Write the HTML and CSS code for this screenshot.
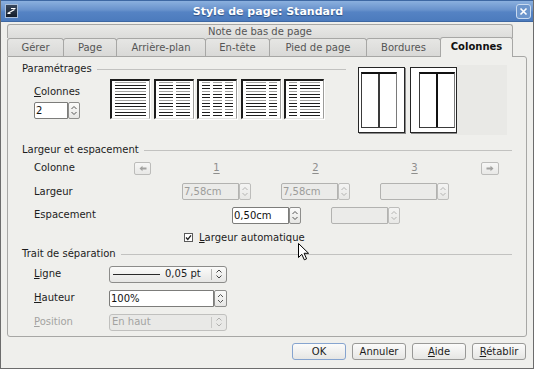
FILE: index.html
```html
<!DOCTYPE html>
<html lang="fr">
<head>
<meta charset="utf-8">
<title>Style de page: Standard</title>
<link rel="stylesheet" href="styles.css">
</head>
<body>
<div class="dialog">
  <div class="titlebar">
    <span class="app-icon">
      <svg width="13" height="14" viewBox="0 0 13 14"><defs><linearGradient id="ig" x1="0" y1="0" x2="0" y2="1"><stop offset="0" stop-color="#3a4a60"/><stop offset="1" stop-color="#121b28"/></linearGradient></defs><rect x="0.5" y="0.5" width="12" height="13" fill="url(#ig)" stroke="#a9bed9"/><path d="M6 4.5 H10.5 M2.5 9.5 L9.5 5.5 M2.5 9.5 H5.5" stroke="#fff" stroke-width="1.2" fill="none"/></svg>
    </span>
    <span class="title">Style de page: Standard</span>
    <span class="close">
      <svg width="15" height="15" viewBox="0 0 15 15"><rect x="0.5" y="0.5" width="14" height="14" rx="2.5" fill="#6d96cc" stroke="#c9daef"/><path d="M4.5 4.5 L10.5 10.5 M10.5 4.5 L4.5 10.5" stroke="#fff" stroke-width="1.6"/></svg>
    </span>
  </div>

  <div class="client">
    <div class="tabrow1"><div class="tab1">Note de bas de page</div></div>
    <div class="tabrow2">
      <div class="tab t-gerer">Gérer</div>
      <div class="tab t-page">Page</div>
      <div class="tab t-arriere">Arrière-plan</div>
      <div class="tab t-entete">En-tête</div>
      <div class="tab t-pied">Pied de page</div>
      <div class="tab t-bord">Bordures</div>
      <div class="tab t-col active">Colonnes</div>
    </div>

    <div class="panel">
      <div class="sec1">
        <div class="sec1-left">
          <div class="heading">Paramétrages</div>
          <div class="sec1-row">
            <div class="colonnes-group">
              <div class="lbl"><u>C</u>olonnes</div>
              <div class="spin sp-cols">
                <div class="spin-input">2</div>
                <div class="spin-btn"><svg width="10" height="15" viewBox="0 0 10 15"><path d="M2.5 6 L5 3.5 L7.5 6 M2.5 9 L5 11.5 L7.5 9" stroke="#555" fill="none"/></svg></div>
              </div>
            </div>
            <div class="presets">
              <div class="preset"><div class="pcol"></div></div>
              <div class="preset"><div class="pcol"></div><div class="pcol"></div></div>
              <div class="preset"><div class="pcol"></div><div class="pcol"></div><div class="pcol"></div></div>
              <div class="preset"><div class="pcol wide"></div><div class="pcol"></div></div>
              <div class="preset"><div class="pcol"></div><div class="pcol wide"></div></div>
            </div>
          </div>
        </div>
        <div class="sec1-right">
          <div class="pv"><div class="pv-page pv-left"><div class="pv-c pv-c1"></div><div class="pv-c"></div></div></div>
          <div class="pv"><div class="pv-page pv-right"><div class="pv-c pv-c1 strong"></div><div class="pv-c"></div></div></div>
          <div class="pv-empty"></div>
        </div>
      </div>

      <div class="heading">Largeur et espacement</div>
      <div class="row r-col">
        <div class="lbl l-col">Colonne</div>
        <div class="arrow-btn"><svg width="8" height="7" viewBox="0 0 8 7"><path d="M0.5 3.5 L3.5 0.8 V2.5 H7.5 V4.5 H3.5 V6.2 Z" fill="#a2a2a0"/></svg></div>
        <div class="num first">1</div>
        <div class="num">2</div>
        <div class="num">3</div>
        <div class="arrow-btn right"><svg width="8" height="7" viewBox="0 0 8 7"><path d="M7.5 3.5 L4.5 0.8 V2.5 H0.5 V4.5 H4.5 V6.2 Z" fill="#a2a2a0"/></svg></div>
      </div>
      <div class="row r-larg">
        <div class="lbl l-larg">Largeur</div>
        <div class="spin dis">
          <div class="spin-input">7,58cm</div>
          <div class="spin-btn"><svg width="10" height="15" viewBox="0 0 10 15"><path d="M2.5 6 L5 3.5 L7.5 6 M2.5 9 L5 11.5 L7.5 9" stroke="#b4b4b2" fill="none"/></svg></div>
        </div>
        <div class="spin dis gap30">
          <div class="spin-input">7,58cm</div>
          <div class="spin-btn"><svg width="10" height="15" viewBox="0 0 10 15"><path d="M2.5 6 L5 3.5 L7.5 6 M2.5 9 L5 11.5 L7.5 9" stroke="#b4b4b2" fill="none"/></svg></div>
        </div>
        <div class="spin dis gap30">
          <div class="spin-input"></div>
          <div class="spin-btn"><svg width="10" height="15" viewBox="0 0 10 15"><path d="M2.5 6 L5 3.5 L7.5 6 M2.5 9 L5 11.5 L7.5 9" stroke="#b4b4b2" fill="none"/></svg></div>
        </div>
      </div>
      <div class="row r-esp">
        <div class="lbl l-esp">Espacement</div>
        <div class="spin">
          <div class="spin-input">0,50cm</div>
          <div class="spin-btn"><svg width="10" height="15" viewBox="0 0 10 15"><path d="M2.5 6 L5 3.5 L7.5 6 M2.5 9 L5 11.5 L7.5 9" stroke="#555" fill="none"/></svg></div>
        </div>
        <div class="spin dis gap30">
          <div class="spin-input"></div>
          <div class="spin-btn"><svg width="10" height="15" viewBox="0 0 10 15"><path d="M2.5 6 L5 3.5 L7.5 6 M2.5 9 L5 11.5 L7.5 9" stroke="#b4b4b2" fill="none"/></svg></div>
        </div>
      </div>
      <div class="row r-chk">
        <div class="check"><svg width="9" height="9" viewBox="0 0 9 9"><rect x="0.5" y="0.5" width="8" height="8" fill="#fff" stroke="#5a5a5a"/><path d="M2 4.5 L3.8 6.5 L7 2.3" stroke="#222" stroke-width="1.3" fill="none"/></svg></div>
        <div class="lbl"><u>L</u>argeur automatique</div>
      </div>

      <div class="heading">Trait de séparation</div>
      <div class="rows3">
        <div class="row r3">
          <div class="lbl l3"><u>L</u>igne</div>
          <div class="combo">
            <span class="combo-line"></span>
            <span class="combo-text">0,05 pt</span>
            <span class="combo-sep"></span>
            <span class="combo-arr"><svg width="8" height="12" viewBox="0 0 8 12"><path d="M1.5 4.5 L4 2 L6.5 4.5 M1.5 7.5 L4 10 L6.5 7.5" stroke="#444" fill="none"/></svg></span>
          </div>
        </div>
        <div class="row r3">
          <div class="lbl l3"><u>H</u>auteur</div>
          <div class="spin sp-haut">
            <div class="spin-input">100%</div>
            <div class="spin-btn"><svg width="11" height="15" viewBox="0 0 11 15"><path d="M3 6 L5.5 3.5 L8 6 M3 9 L5.5 11.5 L8 9" stroke="#555" fill="none"/></svg></div>
          </div>
        </div>
        <div class="row r3">
          <div class="lbl l3 disabled"><u>P</u>osition</div>
          <div class="combo dis">
            <span class="combo-text left">En haut</span>
            <span class="combo-sep"></span>
            <span class="combo-arr"><svg width="8" height="12" viewBox="0 0 8 12"><path d="M1.5 4.5 L4 2 L6.5 4.5 M1.5 7.5 L4 10 L6.5 7.5" stroke="#b0b0ae" fill="none"/></svg></span>
          </div>
        </div>
      </div>
    </div>

    <div class="buttons">
      <div class="btn default">OK</div>
      <div class="btn">Annuler</div>
      <div class="btn"><u>A</u>ide</div>
      <div class="btn"><u>R</u>établir</div>
    </div>
  </div>

  <svg class="cursor" width="12" height="18" viewBox="0 0 12 18"><path d="M0.5 0.5 V14.5 L3.8 11.3 L6.3 16.8 L8.6 15.8 L6.1 10.3 H10.6 Z" fill="#fff" stroke="#000" stroke-linejoin="round"/></svg>
</div>
</body>
</html>
```

FILE: styles.css
```css
html, body {
  margin: 0;
  padding: 0;
}
body {
  background: #efefec;
  font-family: "DejaVu Sans", "Noto Sans", sans-serif;
  font-size: 10px;
  color: #1c1c1c;
}
u { text-decoration: underline; text-underline-offset: 1px; }

.dialog {
  position: relative;
  width: 534px;
  height: 369px;
  box-sizing: border-box;
  background: #efefec;
  border: 1px solid #6c6c6c;
  border-top: none;
  overflow: hidden;
}

/* title bar */
.titlebar {
  height: 22px;
  margin: 0 -1px;
  box-sizing: border-box;
  background: linear-gradient(#8bb0de, #6892cc 45%, #5583c4 55%, #4c7bbd);
  border: 1px solid #3e68a3;
  display: grid;
  grid-template-columns: 1fr auto 1fr;
  align-items: center;
  padding: 0 2px 0 4px;
}
.app-icon { display: flex; justify-self: start; }
.title {
  color: #fff;
  font-weight: bold;
  font-size: 11px;
  text-shadow: 0 1px 1px #2d4f80;
}
.close { display: flex; justify-self: end; }

/* client */
.client {
  padding: 2px 6px 0 6px;
}
.tabrow1 { width: 506px; height: 14px; }
.tab1 {
  height: 14px;
  box-sizing: border-box;
  border: 1px solid #a7a7a5;
  border-bottom: none;
  border-radius: 3px 3px 0 0;
  background: linear-gradient(#e9e9e7, #dcdcda);
  text-align: center;
  line-height: 14px;
  color: #555;
}
.tabrow2 {
  display: flex;
  align-items: flex-end;
  width: 506px;
  height: 18px;
}
.tab {
  height: 18px;
  box-sizing: border-box;
  border: 1px solid #a7a7a5;
  border-bottom: none;
  border-radius: 3px 3px 0 0;
  margin-right: -1px;
  background: linear-gradient(#e6e6e4, #d9d9d7);
  text-align: center;
  line-height: 18px;
  color: #555;
  flex: none;
}
.t-gerer { width: 57px; }
.t-page { width: 54px; }
.t-arriere { width: 90px; }
.t-entete { width: 65px; }
.t-pied { width: 98px; }
.t-bord { width: 75px; }
.t-col { width: 73px; margin-right: 0; }
.tab.active {
  height: 20px;
  margin-bottom: -1px;
  background: #efefec;
  font-weight: bold;
  color: #111;
  line-height: 18px;
  position: relative;
  z-index: 1;
}

/* panel */
.panel {
  width: 520px;
  height: 281px;
  box-sizing: border-box;
  border: 1px solid #a7a7a5;
  border-radius: 0 3px 3px 3px;
  background: #efefec;
  padding: 6px 14px 0 14px;
}
.heading {
  display: flex;
  align-items: center;
  height: 12px;
  line-height: 12px;
  color: #1c1c1c;
}
.heading::after {
  content: "";
  flex: 1;
  height: 1px;
  background: #c2c2c0;
  margin-left: 5px;
}

.sec1 {
  display: flex;
  align-items: flex-start;
  height: 81px;
}
.sec1-left { width: 324px; }
.sec1-row { display: flex; margin-top: 4px; }
.colonnes-group {
  width: 88px;
  box-sizing: border-box;
  padding-left: 12px;
  padding-top: 7px;
}
.colonnes-group .lbl { height: 12px; line-height: 12px; margin-bottom: 4px; }
.presets { display: flex; gap: 3.5px; }
.preset {
  width: 40px;
  height: 40px;
  box-sizing: border-box;
  background: #fff;
  border-top: 2px solid #1c1c1c;
  border-left: 2px solid #1c1c1c;
  border-right: 1px solid #9c9c9a;
  border-bottom: 1px solid #e4e4e2;
  box-shadow: 1px 1px 0 #fff;
  padding: 1px 3px 2px 3px;
  display: flex;
  gap: 3px;
}
.pcol {
  flex: 1;
  background: repeating-linear-gradient(to bottom,
    #a4a4a2 0 1px, transparent 1px 3px,
    #1e1e1e 3px 4px, transparent 4px 6px,
    #1e1e1e 6px 7px, transparent 7px 9px);
}
.pcol.wide { flex: 2.6; }

.sec1-right {
  margin-left: 12px;
  margin-top: 2px;
  height: 70px;
  display: flex;
  align-items: center;
}
.pv {
  width: 47px;
  height: 66px;
  box-sizing: border-box;
  background: #fff;
  border: 1px solid #262626;
  box-shadow: 1px 1px 0 #8a8a8a;
  margin-right: 5px;
  padding-top: 4px;
}
.pv-page {
  width: 36px;
  height: 56px;
  box-sizing: border-box;
  background: #fff;
  border-top: 2px solid #111;
  border-left: 1px solid #3a3a3a;
  border-right: 1px solid #7a7a7a;
  border-bottom: 1px solid #3a3a3a;
  display: flex;
}
.pv-left { margin-left: 2px; }
.pv-right { margin-left: 8px; }
.pv-c { flex: 1; }
.pv-c1 { border-right: 2px solid #3a3a3a; }
.pv-c1.strong { border-right-color: #111; }
.pv-empty {
  width: 50px;
  height: 70px;
  background: #e9e9e6;
  margin-left: -5px;
}

/* rows */
.row {
  display: flex;
  align-items: center;
  padding-left: 12px;
}
.r-col { height: 24px; }
.r-larg { height: 23px; }
.r-esp { height: 24px; }
.r-chk { height: 21px; padding-left: 162px; }
.rows3 { margin-top: 2px; }
.r3 { height: 24px; }
.lbl { line-height: 12px; white-space: nowrap; }
.l-col { width: 100px; }
.l-larg { width: 148px; }
.l-esp { width: 198px; }
.l3 { width: 75px; }
.lbl.disabled { color: #a3a3a1; }

.arrow-btn {
  width: 17px;
  height: 13px;
  box-sizing: border-box;
  border: 1px solid #bcbcba;
  border-radius: 2px;
  background: linear-gradient(#f7f7f6, #e8e8e6);
  display: flex;
  align-items: center;
  justify-content: center;
}
.arrow-btn.right { width: 18px; margin-left: 32px; }
.num {
  width: 69px;
  margin-left: 30px;
  text-align: center;
  color: #8e8e8c;
  text-decoration: underline;
  text-underline-offset: 2px;
  line-height: 12px;
}
.num.first { margin-left: 31px; }

.spin {
  display: flex;
  height: 17px;
  width: 69px;
}
.spin.gap30 { margin-left: 30px; }
.spin-input {
  flex: 1;
  box-sizing: border-box;
  height: 17px;
  border: 1px solid #7c7c7a;
  border-radius: 2px 0 0 2px;
  background: #fff;
  padding-left: 1px;
  line-height: 15px;
  color: #111;
  overflow: hidden;
}
.spin-btn {
  width: 12px;
  height: 17px;
  box-sizing: border-box;
  border: 1px solid #8e8e8c;
  border-radius: 2px;
  background: linear-gradient(#fbfbfa, #e6e6e4);
  display: flex;
  flex: none;
}
.spin.dis .spin-input {
  background: #ebebe9;
  border-color: #b2b2b0;
  color: #9c9c9a;
}
.spin.dis .spin-btn {
  border-color: #bdbdbb;
  background: linear-gradient(#f4f4f3, #e8e8e6);
}
.sp-cols { width: 46px; }
.sp-haut { width: 118px; }
.sp-haut .spin-btn { width: 13px; }

.check { display: flex; margin-right: 6px; }

.combo {
  width: 118px;
  height: 17px;
  box-sizing: border-box;
  border: 1px solid #8c8c8a;
  border-radius: 3px;
  background: linear-gradient(#fbfbfa, #e6e6e4);
  display: flex;
  align-items: center;
}
.combo-line {
  width: 47px;
  height: 1px;
  background: #2a2a2a;
  margin-left: 3px;
}
.combo-text {
  margin-left: 5px;
  line-height: 12px;
  color: #1c1c1c;
}
.combo-text.left { margin-left: 2px; }
.combo-sep {
  margin-left: auto;
  width: 1px;
  height: 11px;
  background: #b2b2b0;
}
.combo-arr {
  width: 14px;
  display: flex;
  justify-content: center;
}
.combo.dis {
  background: #e9e9e7;
  border-color: #c0c0be;
}
.combo.dis .combo-text { color: #a3a3a1; }
.combo.dis .combo-sep { background: #c8c8c6; }

/* buttons */
.buttons {
  display: flex;
  justify-content: flex-end;
  gap: 6px;
  margin-top: 6px;
  margin-right: 1px;
}
.btn {
  width: 54px;
  height: 17px;
  box-sizing: border-box;
  border: 1px solid #999997;
  border-radius: 3px;
  background: linear-gradient(#fbfbfa, #e6e6e4);
  text-align: center;
  line-height: 15px;
  color: #1c1c1c;
}
.btn.default { border-color: #86a4cf; }

.cursor {
  position: absolute;
  left: 297px;
  top: 243px;
}
```
